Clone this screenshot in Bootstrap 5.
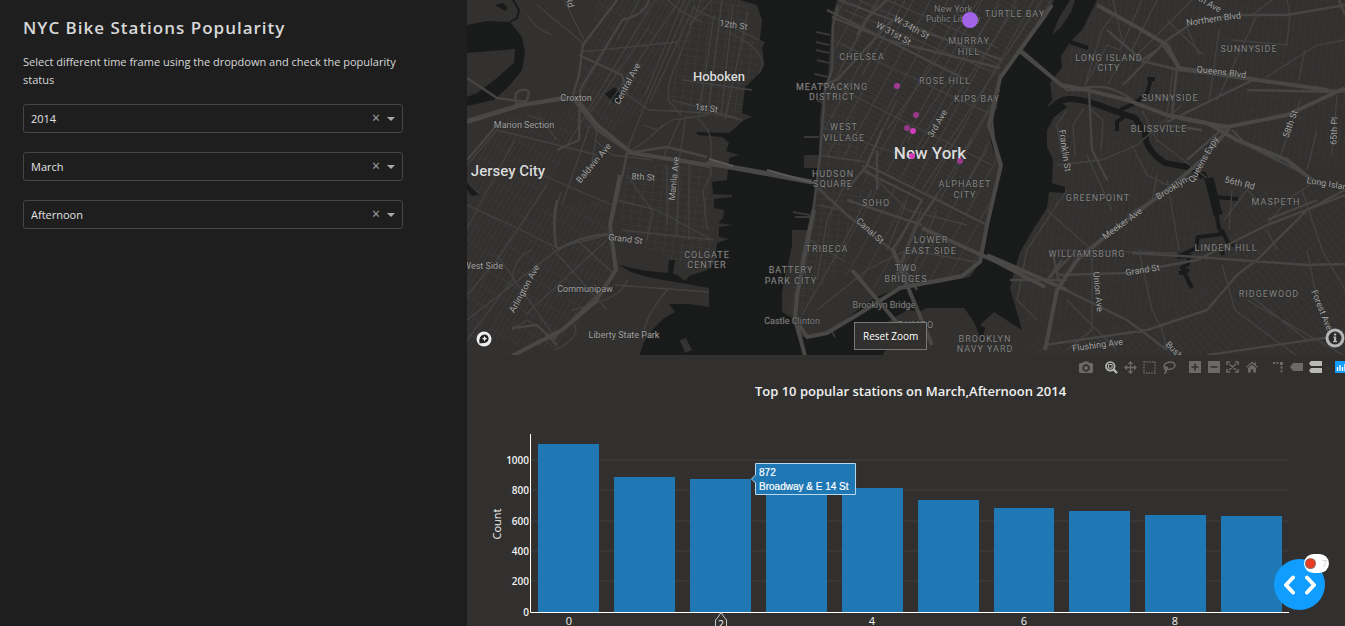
<!DOCTYPE html>
<html lang="en">
<head>
<meta charset="utf-8">
<meta name="viewport" content="width=device-width, initial-scale=1">
<title>NYC Bike Stations Popularity</title>
<link href="https://cdn.jsdelivr.net/npm/bootstrap@5.3.0/dist/css/bootstrap.min.css" rel="stylesheet">
<style>
body{background:#1e1e1e;color:#d8d8d8;font-family:"Open Sans",sans-serif;font-size:11px}
.side-panel{flex:0 0 34.72%;padding:17px 64px 0 23px}
.side-panel h1{font-size:17px;line-height:22px;letter-spacing:1px;font-weight:600;margin-bottom:14px}
.intro{line-height:18px;margin-bottom:15px}
.filters{display:grid;gap:19px}
.picker .form-select{height:29px;padding:4px 56px 4px 7px;font-size:11px;line-height:19px;color:#e2e2e2;border:1px solid #454545;border-radius:3px;background:#1e1e1e url("data:image/svg+xml,%3Csvg xmlns='http://www.w3.org/2000/svg' viewBox='0 0 8 4'%3E%3Cpath d='M0 0h8L4 4z' fill='%23aaa'/%3E%3C/svg%3E") no-repeat right 7px center/8px 4px}
.clear-btn{right:22px;top:0;height:28px;width:10px;color:#a5a5a5;font-size:14px;line-height:26px}
.main-panel{background:#31302f}
.map-panel{min-height:0}
.chart-panel{flex:0 0 271px}
.map-svg text{font-family:Roboto,sans-serif;fill:#a2a2a1;font-size:9px;text-anchor:middle;stroke:#2b2a29;stroke-width:1px;paint-order:stroke;stroke-linejoin:round}
.map-svg .hood text{fill:#858584;letter-spacing:1px}
.map-svg .dim text{fill:#7e7e7d}
.map-svg .city text{fill:#dadada;font-weight:500}
.map-svg .city .c-sm{font-size:13px}
.map-svg .city .c-md{font-size:15px}
.map-svg .city .c-lg{font-size:17px}
.reset-btn{left:44.1%;bottom:5px;width:73px;height:28px;font-size:10px;line-height:26px;color:#fff;background:#31302f;border:1px solid #777;border-radius:0}
.reset-btn:hover{color:#fff;border-color:#aaa}
.logo-mark{left:9px;bottom:8px}
.info-btn{right:0;bottom:7px}
.modebar{height:24px;margin-right:-6px;gap:7px;color:#6b6a69}
.modebar button{width:19px;height:16px;color:inherit}
.modebar button.on{color:#b9b9b8}
.chart-title{font-size:13px;line-height:24px;font-weight:600;color:#f0f0f0;padding-left:9px}
.plot text{font-family:"Open Sans",sans-serif;font-size:11px;fill:#f0f0f0}
.plot .y-ticks text{font-size:10px;font-weight:600}
.plot .hover-tip text{font-family:"Liberation Sans",sans-serif;font-size:10px;fill:#fff;stroke:#fff;stroke-width:.2px}
.dev-menu{right:20px;bottom:16px;width:51px;height:51px;background:#119dff}
.dev-count{right:16px;bottom:53px;width:25px;height:19px;color:#ccc;font-size:9px;gap:7px}
.dev-count i{width:9px;height:9px;background:#ea3b20;box-shadow:0 0 0 1px #8a6a62}
</style>
</head>
<body class="vh-100 overflow-hidden">
<div class="d-flex h-100">
<aside class="side-panel">
  <h1>NYC Bike Stations Popularity</h1>
  <p class="intro">Select different time frame using the dropdown and check the popularity status</p>
  <form class="filters">
    <div class="picker position-relative"><label class="visually-hidden" for="year">Year</label><select class="form-select" id="year"><option>2014</option></select><button type="button" class="clear-btn btn p-0 border-0 position-absolute" aria-label="Clear year">×</button></div>
    <div class="picker position-relative"><label class="visually-hidden" for="month">Month</label><select class="form-select" id="month"><option>March</option></select><button type="button" class="clear-btn btn p-0 border-0 position-absolute" aria-label="Clear month">×</button></div>
    <div class="picker position-relative"><label class="visually-hidden" for="time">Time of day</label><select class="form-select" id="time"><option>Afternoon</option></select><button type="button" class="clear-btn btn p-0 border-0 position-absolute" aria-label="Clear time of day">×</button></div>
  </form>
</aside>
<main class="main-panel flex-fill d-flex flex-column overflow-hidden">
<section class="map-panel position-relative flex-fill overflow-hidden">
<svg class="map-svg d-block w-100 h-100" viewBox="0 0 878 355" preserveAspectRatio="xMidYMid slice">
<defs>
  <pattern id="gridMid" width="5" height="16" patternUnits="userSpaceOnUse" patternTransform="rotate(30)"><path d="M0 0H5M0 0V16" stroke="#3d3c3b" fill="none"/></pattern>
  <pattern id="gridMan" width="15" height="5" patternUnits="userSpaceOnUse" patternTransform="rotate(29)"><path d="M0 0H15" stroke="#3b3a39" fill="none"/><path d="M0 0V5" stroke="#464544" stroke-width="1.6"/></pattern>
  <pattern id="gridHob" width="9" height="7" patternUnits="userSpaceOnUse" patternTransform="rotate(7)"><path d="M0 0H9M0 0V7" stroke="#3e3d3c" fill="none"/></pattern>
  <pattern id="gridQ" width="6" height="17" patternUnits="userSpaceOnUse" patternTransform="rotate(8)"><path d="M0 0H6M0 0V17" stroke="#393837" fill="none"/></pattern>
  <pattern id="gridR" width="6" height="14" patternUnits="userSpaceOnUse" patternTransform="rotate(-38)"><path d="M0 0H6M0 0V14" stroke="#3b3a39" fill="none"/></pattern>
</defs>
<rect width="878" height="356" fill="#323130"/>
<!-- street grids -->
<path fill="url(#gridMid)" d="M130 0H212L190 60 175 110 130 140 100 120 118 60ZM30 115L105 112 105 150 70 200 60 260 0 350V180Z M60 210L140 200 145 275 90 350 20 340Z"/>
<path fill="url(#gridHob)" d="M215 0H280L292 60 272 120 200 112ZM158 165H243V255L225 268 160 240 150 200Z"/>
<path fill="url(#gridQ)" d="M625 0H878V170L735 140 700 160 655 120 590 95 600 55ZM585 115L655 135 700 180 740 220 740 300 665 320 560 320 548 270 575 215 600 180Z"/>
<path fill="url(#gridR)" d="M770 190H878V356H560L570 335 700 320 760 260Z"/>
<!-- rivers and creeks -->
<g fill="#191a1a">
<path d="M0 25L20 21 43 22 55 37 58 53 55 70 43 85 27 100 0 106V97L10 93 30 78 47 63 48 49 0 53ZM28 5L36 3 41 8 38 11ZM138 94L148 87 157 99 147 103ZM0 183L12 195 5 196 0 190Z"/>
<path d="M273 0L290 5 295 20 293 40 298 42 295 48 297 62 293 73 278 87 275 113 285 117 277 120 262 133 229 132 231 135 255 137 262 143 259 151 272 155 262 158 260 180 245 182 246 194 265 195V197L247 199V208L257 210 256 218 251 223 266 225 252 227V237L262 239 250 243 248 262 240 270 222 276 218 281 210 275 206 274 208 260 202 260 201 273 180 271 165 268 152 265 164 272 180 277 242 288 242 307 222 304 202 304 208 312 197 318 187 328 177 342 172 356H415L424 340 427 325 455 310 460 308 497 308 507 322 515 342 518 328 513 325 527 312 555 330 547 302 543 288 547 272 553 252 567 228 580 208 582 192 598 193V187L585 183 586 160 580 147V130L587 117 600 107 592 101 580 107 585 100 583 83 595 67 594 56 598 50 603 42 615 30 630 0H587L580 17 553 53 533 80 530 108 522 117V133L527 153 533 160 535 170 533 175 525 202 520 228 513 262 503 277 473 283 433 287 410 297 393 308 373 325 357 335 340 338 330 335 325 318 315 312V292L318 275 322 260 325 245V230H343L349 188 352 168H337V155H352L353 117 357 85 361 77 363 43 365 17 370 0Z"/>
</g>
<path fill="#323130" d="M585 35L592 18 603 0H608L604 12 594 27ZM213 340L219 338 225 350 218 353ZM415 325L440 310 458 312 450 340 415 345Z"/>
<g fill="none" stroke="#191a1a">
<path d="M46 0L52 10 50 18 43 22" stroke-width="2"/>
<path d="M580 115Q590 98 605 99T645 110L668 118 678 133Q678 150 698 163L725 168 736 177" stroke-width="6"/>
<path d="M736 172L745 190 752 228 756 234 731 237 729 248 710 257 722 256 721 264 715 268 725 288M755 230L761 243 767 245M752 245L756 255M748 197L771 199M712 273L722 270M653 110L668 103 680 93 684 79M680 79H688M658 116L650 122V131M603 42L621 48" stroke-width="4"/>
<path d="M742 178L751 215" stroke-width="9"/>
</g>
<path d="M349 32L363 35M349 42L362 45M349 50L362 53M350 60L362 63M347 74L361 77M350 100L356 103M337 137H352M326 212L343 215M328 217H343M214 341l8 9M363 329l5 8" stroke="#393837" stroke-width="2"/>
<!-- Manhattan blocks -->
<path fill="url(#gridMan)" d="M371 0H585L553 50 531 82 520 120 524 150 532 167 520 225 480 205 400 165 354 155 365 80Z"/>
<path fill="url(#gridHob)" d="M354 105L390 115 395 165 352 165ZM350 185L400 190 375 265 330 318 320 310Z"/>
<path fill="url(#gridMan)" d="M400 170L520 228 505 273 410 290 370 270Z" opacity=".7"/>
<!-- local roads -->
<g fill="none" stroke="#434241" stroke-width="1.3">
<path d="M60 15Q70 30 85 35M70 5L110 38 116 43M97 0L118 42M188 0L100 145M213 0L141 105M172 0L150 40M182 27L118 120M210 42L113 52M155 75L116 57M217 0L178 95M223 0L180 100M228 5L183 102M234 0L211 60Q200 80 201 100L215 116M201 0Q212 12 235 22M226 8L292 40M222 25L245 0M262 33Q292 45 296 65L292 73M255 0L241 115M266 5L254 115M281 12L258 120M247 15L232 115M215 80L285 90M205 100L270 118M160 95L182 110 245 113 275 120M180 100L160 150M176 125L190 130 205 120 240 115M214 118L195 160M219 115L210 175M155 157L180 140 196 125M230 118Q245 130 244 145V175L236 190 240 230M0 165L30 130 130 155M0 205L50 228 90 248 140 235M75 175L145 205M48 140L0 228M80 185L30 260 0 295M94 192Q85 215 90 250L0 320M65 250Q48 255 45 280L0 340M85 248L140 310M110 240L148 275M140 240L58 315M103 320Q120 335 88 350M105 310Q150 300 158 285L160 280M30 255L90 340M45 330L60 320 90 340M148 285L242 292M200 290Q180 315 177 330M150 200L190 210 245 240M160 175L186 212 180 240M200 165V225M212 165L210 235M222 165V240M155 230L247 240M128 140L145 155 185 160M60 115L75 120 90 140M123 125L95 205M130 130L123 175"/>
<path d="M378 10L533 75M392 0L530 63M420 0L531 48M365 40L525 115M373 70L410 0M395 75L438 0M420 130L512 0M440 142L532 5M455 148L550 5M473 155L575 0M490 162L533 90M365 85L525 165M354 127L442 158M352 155L400 162 430 100M395 165L440 210 500 225M380 180L360 220 350 280M405 190L375 245 335 315M440 200L420 250M455 208L432 265M470 210L445 270M400 270L440 250 510 262M352 205L372 210M343 240L378 262M350 310L400 270M490 200L520 150M470 195L505 140M455 190L495 130"/>
<path d="M675 0L653 50 640 45 620 82M655 40L646 0M690 0L665 50 673 60M725 0L670 55M700 20L736 55M790 15L750 100M820 0L823 15 820 45 765 40M785 15L805 0M878 40L850 45 798 78M832 80L838 50M870 95L865 155M833 100L812 160M850 130L840 170M752 30L742 100M720 28L732 55M618 85L635 30 650 10M706 70L700 115M640 85L655 60M590 165L635 160 670 145 715 105M665 145L680 175 700 185M675 110L690 140 740 178M600 110L590 125 595 155M617 108L606 125 608 155M622 108L636 120 634 150M690 175L685 200 660 215M700 180L712 250M620 155L645 210M580 210L625 250 625 330 600 350M583 215L560 250 550 300 570 320M600 190L570 235M590 250L710 253M672 250L685 310 695 330 700 350M757 220L780 190 790 200M850 180L820 200 800 225M765 190L762 230M835 190L855 250 878 290M800 230L810 250M755 265L768 310 830 356M840 250L850 300M780 300L878 356M650 350L600 300M776 290L840 340"/>
</g>
<!-- avenues and expressways -->
<g fill="none" stroke="#464544" stroke-width="2.4" stroke-linejoin="round">
<path d="M150 0L116 45 112 75 105 98M182 0Q178 15 155 20L113 90 112 140 90 150M112 55L155 75 160 95M0 120L50 105 92 98 105 98 130 130 162 152M50 105Q45 92 55 90T60 100L50 105M0 78L30 98 60 102M155 178L160 153 200 147 240 157M160 153L205 160 243 167M30 125L0 160M155 175L143 230 148 270 140 285 85 340M143 234Q115 235 90 250M89 248Q85 220 90 200M45 328L70 325 90 345"/>
<path d="M371 5L366 25 365 70 358 90 353 155 347 205 335 260 328 320M533 80L525 120 528 150 534 170M365 17L420 40 533 68M372 0L430 22 535 60M354 85L370 80 425 20M360 10L500 80M351 188L380 215 425 250 450 290M395 170L455 200M400 165L520 225M380 200L455 225M455 200L435 235 425 250M470 195L450 225 430 275M420 0L400 18 390 35M415 130L400 165 380 190M410 150V190"/>
<path d="M550 50L600 90 625 90M692 40L710 65 705 115M671 60L712 70 790 80 878 92M700 122L790 78M656 85L700 40 730 20 775 15 820 15 878 5M622 92L625 150 640 180M608 90Q640 80 665 100M640 30L675 60 690 50M872 0L878 15M698 125L735 130M760 125L720 160M765 130L780 145 840 175M610 250L580 280 595 260M585 250L592 282M592 275L660 273 730 260 800 225 878 195M665 253L730 257 840 265 878 264M543 280L600 280M578 280L660 320 700 350M578 345L680 330 740 310 770 275 790 260 840 210 878 190M800 220L850 200M740 355L878 335M780 90L870 92"/>
</g>
<g fill="none" stroke="#494847" stroke-width="4" stroke-linejoin="round">
<path d="M0 122L55 105 100 98M108 97L130 125 165 153 242 165M153 175L143 225 149 270 128 302 95 330 45 356"/>
<path d="M240 163L280 170 345 182" stroke-width="5"/>
<path d="M585 5L553 50 533 78 522 125 534 165 520 225 513 262 495 276 433 288 395 312 360 333 340 337 328 318 330 295 347 210M553 50L594 85 620 90 660 100 700 115 740 123 770 140 820 160 845 180M520 255L600 290M455 228L530 262 578 287M385 270L432 325M426 250L440 285 465 345M630 5L675 30 700 45 712 68 790 80 860 90M712 118L760 127 820 115 878 88M762 128L735 160 700 190 640 235 610 260 590 290 578 350M328 318L338 356"/>
</g>
<path d="M242 159L266 166M300 170L350 184" stroke="#5a5958" stroke-width="2"/>
<g class="city">
<text class="c-md" x="41" y="176">Jersey City</text><text class="c-sm" x="252" y="81">Hoboken</text><text class="c-lg" x="463" y="159">New York</text>
</g>
<g class="hood">
<text x="395" y="60">CHELSEA</text><text x="365" y="90">MEATPACKING</text><text x="365" y="100">DISTRICT</text><text x="377" y="130">WEST</text><text x="377" y="141">VILLAGE</text><text x="366" y="177">HUDSON</text><text x="366" y="187">SQUARE</text><text x="409" y="206">SOHO</text><text x="360" y="252">TRIBECA</text><text x="324" y="273">BATTERY</text><text x="324" y="284">PARK CITY</text><text x="240" y="258">COLGATE</text><text x="240" y="268">CENTER</text><text x="464" y="243">LOWER</text><text x="464" y="254">EAST SIDE</text><text x="439" y="271">TWO</text><text x="439" y="282">BRIDGES</text><text x="498" y="187">ALPHABET</text><text x="498" y="198">CITY</text><text x="478" y="84">ROSE HILL</text><text x="510" y="102">KIPS BAY</text><text x="502" y="44">MURRAY</text><text x="502" y="55">HILL</text><text x="548" y="17">TURTLE BAY</text><text x="642" y="61">LONG ISLAND</text><text x="642" y="71">CITY</text><text x="782" y="52">SUNNYSIDE</text><text x="703" y="101">SUNNYSIDE</text><text x="692" y="132">BLISSVILLE</text><text x="631" y="201">GREENPOINT</text><text x="620" y="257">WILLIAMSBURG</text><text x="809" y="205">MASPETH</text><text x="759" y="251">LINDEN HILL</text><text x="802" y="297">RIDGEWOOD</text><text x="518" y="342">BROOKLYN</text><text x="518" y="352">NAVY YARD</text><text x="449" y="328">DUMBO</text>
</g>
<g>
<text x="109" y="101">Croxton</text><text x="57" y="128">Marion Section</text><text x="16" y="269">West Side</text><text x="118" y="292">Communipaw</text><text x="157" y="338">Liberty State Park</text>
<text transform="translate(100 3) rotate(75)">Rd</text><text transform="translate(266 28) rotate(8)">12th St</text><text transform="translate(239 111) rotate(8)">1st St</text><text transform="translate(176 180) rotate(4)">8th St</text><text transform="translate(158 242) rotate(7)">Grand St</text><text transform="translate(163 85) rotate(-62)">Central Ave</text><text transform="translate(129 165) rotate(-50)">Baldwin Ave</text><text transform="translate(210 179) rotate(-84)">Manila Ave</text><text transform="translate(60 290) rotate(-61)">Arlington Ave</text>
<text transform="translate(443 30) rotate(29)">W 34th St</text><text transform="translate(425 36) rotate(29)">W 31st St</text><text transform="translate(473 125) rotate(-60)">3rd Ave</text><text transform="translate(401 233) rotate(42)">Canal St</text>
<text transform="translate(737 4) rotate(30)">48th Ave</text><text transform="translate(747 22) rotate(-8)">Northern Blvd</text><text transform="translate(754 75) rotate(7)">Queens Blvd</text><text transform="translate(595 151) rotate(82)">Franklin St</text><text transform="translate(826 125) rotate(-70)">58th St</text><text transform="translate(870 131) rotate(-87)">65th Pl</text><text transform="translate(772 186) rotate(14)">56th Rd</text><text transform="translate(862 187) rotate(10)">Long Island</text><text transform="translate(707 190) rotate(-32)">Brooklyn-</text><text transform="translate(739 161) rotate(-60)">Queens Expy</text><text transform="translate(657 226) rotate(-36)">Meeker Ave</text><text transform="translate(676 273) rotate(-9)">Grand St</text><text transform="translate(628 292) rotate(84)">Union Ave</text><text transform="translate(631 348) rotate(-8)">Flushing Ave</text><text transform="translate(705 352) rotate(45)">Bush</text><text transform="translate(852 311) rotate(68)">Forest Ave</text>
</g>
<g class="dim"><text x="486" y="12">New York</text><text x="486" y="22">Public Library</text><text x="417" y="308">Brooklyn Bridge</text><text x="325" y="324">Castle Clinton</text></g>
<g fill="#b83aa6"><circle cx="430" cy="86" r="3" opacity=".85"/><circle cx="449" cy="115" r="3" opacity=".75"/><circle cx="440" cy="128" r="3" opacity=".75"/><circle cx="446" cy="131" r="3" fill="#d03bb7"/><circle cx="445" cy="156" r="3" fill="#d03bb7"/><circle cx="493" cy="161" r="3" opacity=".75"/></g>
<circle cx="503" cy="20" r="8" fill="#a163e8"/>
</svg>
<svg class="logo-mark position-absolute" width="16" height="16" viewBox="0 0 16 16" role="img" aria-label="Mapbox"><circle cx="8" cy="8" r="7.5" fill="#eee"/><path d="M3.500 12.200Q2.500 4 8.500 3.500A4 4 0 0 1 12.600 8Q12 13 3.500 12.200Z" fill="#222"/><path d="M8.600 5l.9 1.800 1.800.9-1.800.9-.9 1.800-.9-1.800-1.800-.9 1.800-.9z" fill="#eee"/></svg>
<button class="reset-btn btn p-0 position-absolute" type="button">Reset Zoom</button>
<button class="info-btn btn p-0 border-0 position-absolute lh-1" type="button" aria-label="Map attribution"><svg width="20" height="20" viewBox="0 0 20 20"><circle cx="10" cy="10" r="9.5" fill="#b5b5b5"/><circle cx="10" cy="10" r="6.5" fill="#2b2a29"/><path d="M9 5.500h2.200v2H9zM8.500 8.500h2.700V13h1v1.300H8V13h1V9.700h-.5z" fill="#b5b5b5"/></svg></button>
</section>
<section class="chart-panel overflow-hidden">
<div class="modebar d-flex justify-content-end align-items-center">
<div class="d-flex"><button class="btn p-0 border-0 d-flex justify-content-center align-items-center" aria-label="Download plot"><svg width="14" height="12" viewBox="0 0 14 12" fill="currentColor"><path fill-rule="evenodd" d="M1 2h2.500L5 .5h4L10.500 2H13l1 1v8l-1 1H1l-1-1V3zM7 3.300a3.700 3.700 0 1 0 .01 0zM7 5a2 2 0 1 1-.01 0z"/></svg></button></div>
<div class="d-flex">
<button class="on btn p-0 border-0 d-flex justify-content-center align-items-center" aria-label="Zoom"><svg width="13" height="13" viewBox="0 0 13 13" fill="none" stroke="currentColor"><circle cx="5.300" cy="5.300" r="4.300" stroke-width="1.700"/><path d="M8.500 8.500L12 12" stroke-width="2.400"/><path d="M3.500 3.500h3.600v3.600H3.500z"/></svg></button>
<button class="btn p-0 border-0 d-flex justify-content-center align-items-center" aria-label="Pan"><svg width="13" height="13" viewBox="0 0 13 13" fill="none" stroke="currentColor" stroke-width="1.300"><path d="M6.500 1v11M1 6.500h11M4.500 3l2-2 2 2M4.500 10l2 2 2-2M3 4.500l-2 2 2 2M10 4.500l2 2-2 2"/></svg></button>
<button class="btn p-0 border-0 d-flex justify-content-center align-items-center" aria-label="Box select"><svg width="13" height="13" viewBox="0 0 13 13" fill="none" stroke="currentColor" stroke-width="1.400" stroke-dasharray="1.500 1.200"><path d="M1 1h11v11H1z"/></svg></button>
<button class="btn p-0 border-0 d-flex justify-content-center align-items-center" aria-label="Lasso select"><svg width="14" height="13" viewBox="0 0 14 13" fill="none" stroke="currentColor" stroke-width="1.500"><ellipse cx="7.500" cy="4.700" rx="5.500" ry="3.600" transform="rotate(-10 7.500 4.700)"/><circle cx="4" cy="7.500" r="1.400"/><path d="M3 8.500q3 2-1 4"/></svg></button>
</div>
<div class="d-flex">
<button class="btn p-0 border-0 d-flex justify-content-center align-items-center" aria-label="Zoom in"><svg width="12" height="12" viewBox="0 0 12 12"><path fill="currentColor" d="M0 0h12v12H0z"/><path d="M6 2.500v7M2.500 6h7" stroke="#31302f" stroke-width="1.600"/></svg></button>
<button class="btn p-0 border-0 d-flex justify-content-center align-items-center" aria-label="Zoom out"><svg width="12" height="12" viewBox="0 0 12 12"><path fill="currentColor" d="M0 0h12v12H0z"/><path d="M2.500 6h7" stroke="#31302f" stroke-width="1.600"/></svg></button>
<button class="btn p-0 border-0 d-flex justify-content-center align-items-center" aria-label="Autoscale"><svg width="13" height="12" viewBox="0 0 13 12" fill="none" stroke="currentColor" stroke-width="1.500"><path d="M1 4V1h3M9 1h3v3M12 8v3H9M4 11H1V8M3 3l7 6M10 3l-7 6"/></svg></button>
<button class="btn p-0 border-0 d-flex justify-content-center align-items-center" aria-label="Reset axes"><svg width="12" height="12" viewBox="0 0 12 12" fill="currentColor"><path d="M6 .5l2.500 2.200V1.500H10V4l2 2-.8.800L6 2.300.8 6.800 0 6zM6 3.500l4 3.500v4.500H7.200V8.300H4.800v3.200H2V7z"/></svg></button>
</div>
<div class="d-flex">
<button class="btn p-0 border-0 d-flex justify-content-center align-items-center" aria-label="Toggle spike lines"><svg width="12" height="12" viewBox="0 0 12 12" fill="currentColor"><path d="M1 1h2v2H1zM4.500 1h2v2h-2zM8 1h3v3H8zM8.500 5.200h2v2.600h-2zM8.500 9.200h2v2h-2z"/></svg></button>
<button class="btn p-0 border-0 d-flex justify-content-center align-items-center" aria-label="Show closest data"><svg width="13" height="8" viewBox="0 0 13 8" fill="currentColor"><path d="M0 4l3-4h10v8H3z"/></svg></button>
<button class="on btn p-0 border-0 d-flex justify-content-center align-items-center" aria-label="Compare data"><svg width="13" height="12" viewBox="0 0 13 12" fill="currentColor"><path d="M0 2.500L2 0h11v5H2zM0 9.500L2 7h11v5H2z"/></svg></button>
</div>
<div class="d-flex"><button class="btn p-0 border-0 d-flex justify-content-center align-items-center" aria-label="Plotly"><svg width="14" height="12" viewBox="0 0 14 12"><path fill="#119dff" d="M0 0h14v12H0z"/><path d="M2.500 10V6M5 10V4M7.500 10V6M10 10V3" stroke="#fff" stroke-width="1.400"/></svg></button></div>
</div>
<h2 class="chart-title text-center mb-0">Top 10 popular stations on March,Afternoon 2014</h2>
<svg class="plot d-block w-100" viewBox="0 0 878 250">
<path d="M63 57H822M63 87H822M63 118H822M63 148H822M63 178H822" stroke="#403f3e"/>
<path fill="#1f77b4" d="M71 41h61v168H71zM147 74h61v135h-61zM223 76h61v133h-61zM299 86h61v123h-61zM375 85h61v124h-61zM451 97h61v112h-61zM527 105h60v104h-60zM602 108h61v101h-61zM678 112h61v97h-61zM754 113h61v96h-61z"/>
<path d="M63.5 31V209.5H822" fill="none" stroke="#fff"/>
<g class="y-ticks" text-anchor="end"><text x="62" y="61">1000</text><text x="62" y="91">800</text><text x="62" y="122">600</text><text x="62" y="152">400</text><text x="62" y="182">200</text><text x="62" y="213">0</text></g>
<g text-anchor="middle"><text x="102" y="222">0</text><text x="405" y="222">4</text><text x="557" y="222">6</text><text x="708" y="222">8</text><text transform="translate(34 121) rotate(-90)">Count</text></g>
<path d="M248.500 235V217L251 214 254 209.500 257 214 259.500 217V235Z" fill="#31302f" stroke="#ccc"/><text x="254" y="225" text-anchor="middle">2</text>
<g class="hover-tip"><path d="M284.500 76L288.500 72V60.500H388.500V91.500H288.500V80Z" fill="#1f77b4" stroke="#b9d8ec"/><text x="292" y="73">872</text><text x="292" y="87">Broadway &amp; E 14 St</text></g>
</svg>
</section>
</main>
</div>
<button class="dev-menu btn rounded-circle border-0 p-0 position-fixed d-flex justify-content-center align-items-center" type="button" aria-label="Developer tools"><svg width="34" height="20" viewBox="0 0 34 20" fill="none" stroke="#fff" stroke-width="4" stroke-linecap="round" stroke-linejoin="round"><path d="M10 2.500L3 10l7 7.500M24 2.500L31 10l-7 7.500"/></svg></button>
<span class="dev-count bg-white rounded-pill position-fixed d-flex justify-content-center align-items-center"><i class="rounded-circle"></i>7</span>
<script src="https://cdn.jsdelivr.net/npm/bootstrap@5.3.0/dist/js/bootstrap.bundle.min.js"></script>
</body>
</html>
